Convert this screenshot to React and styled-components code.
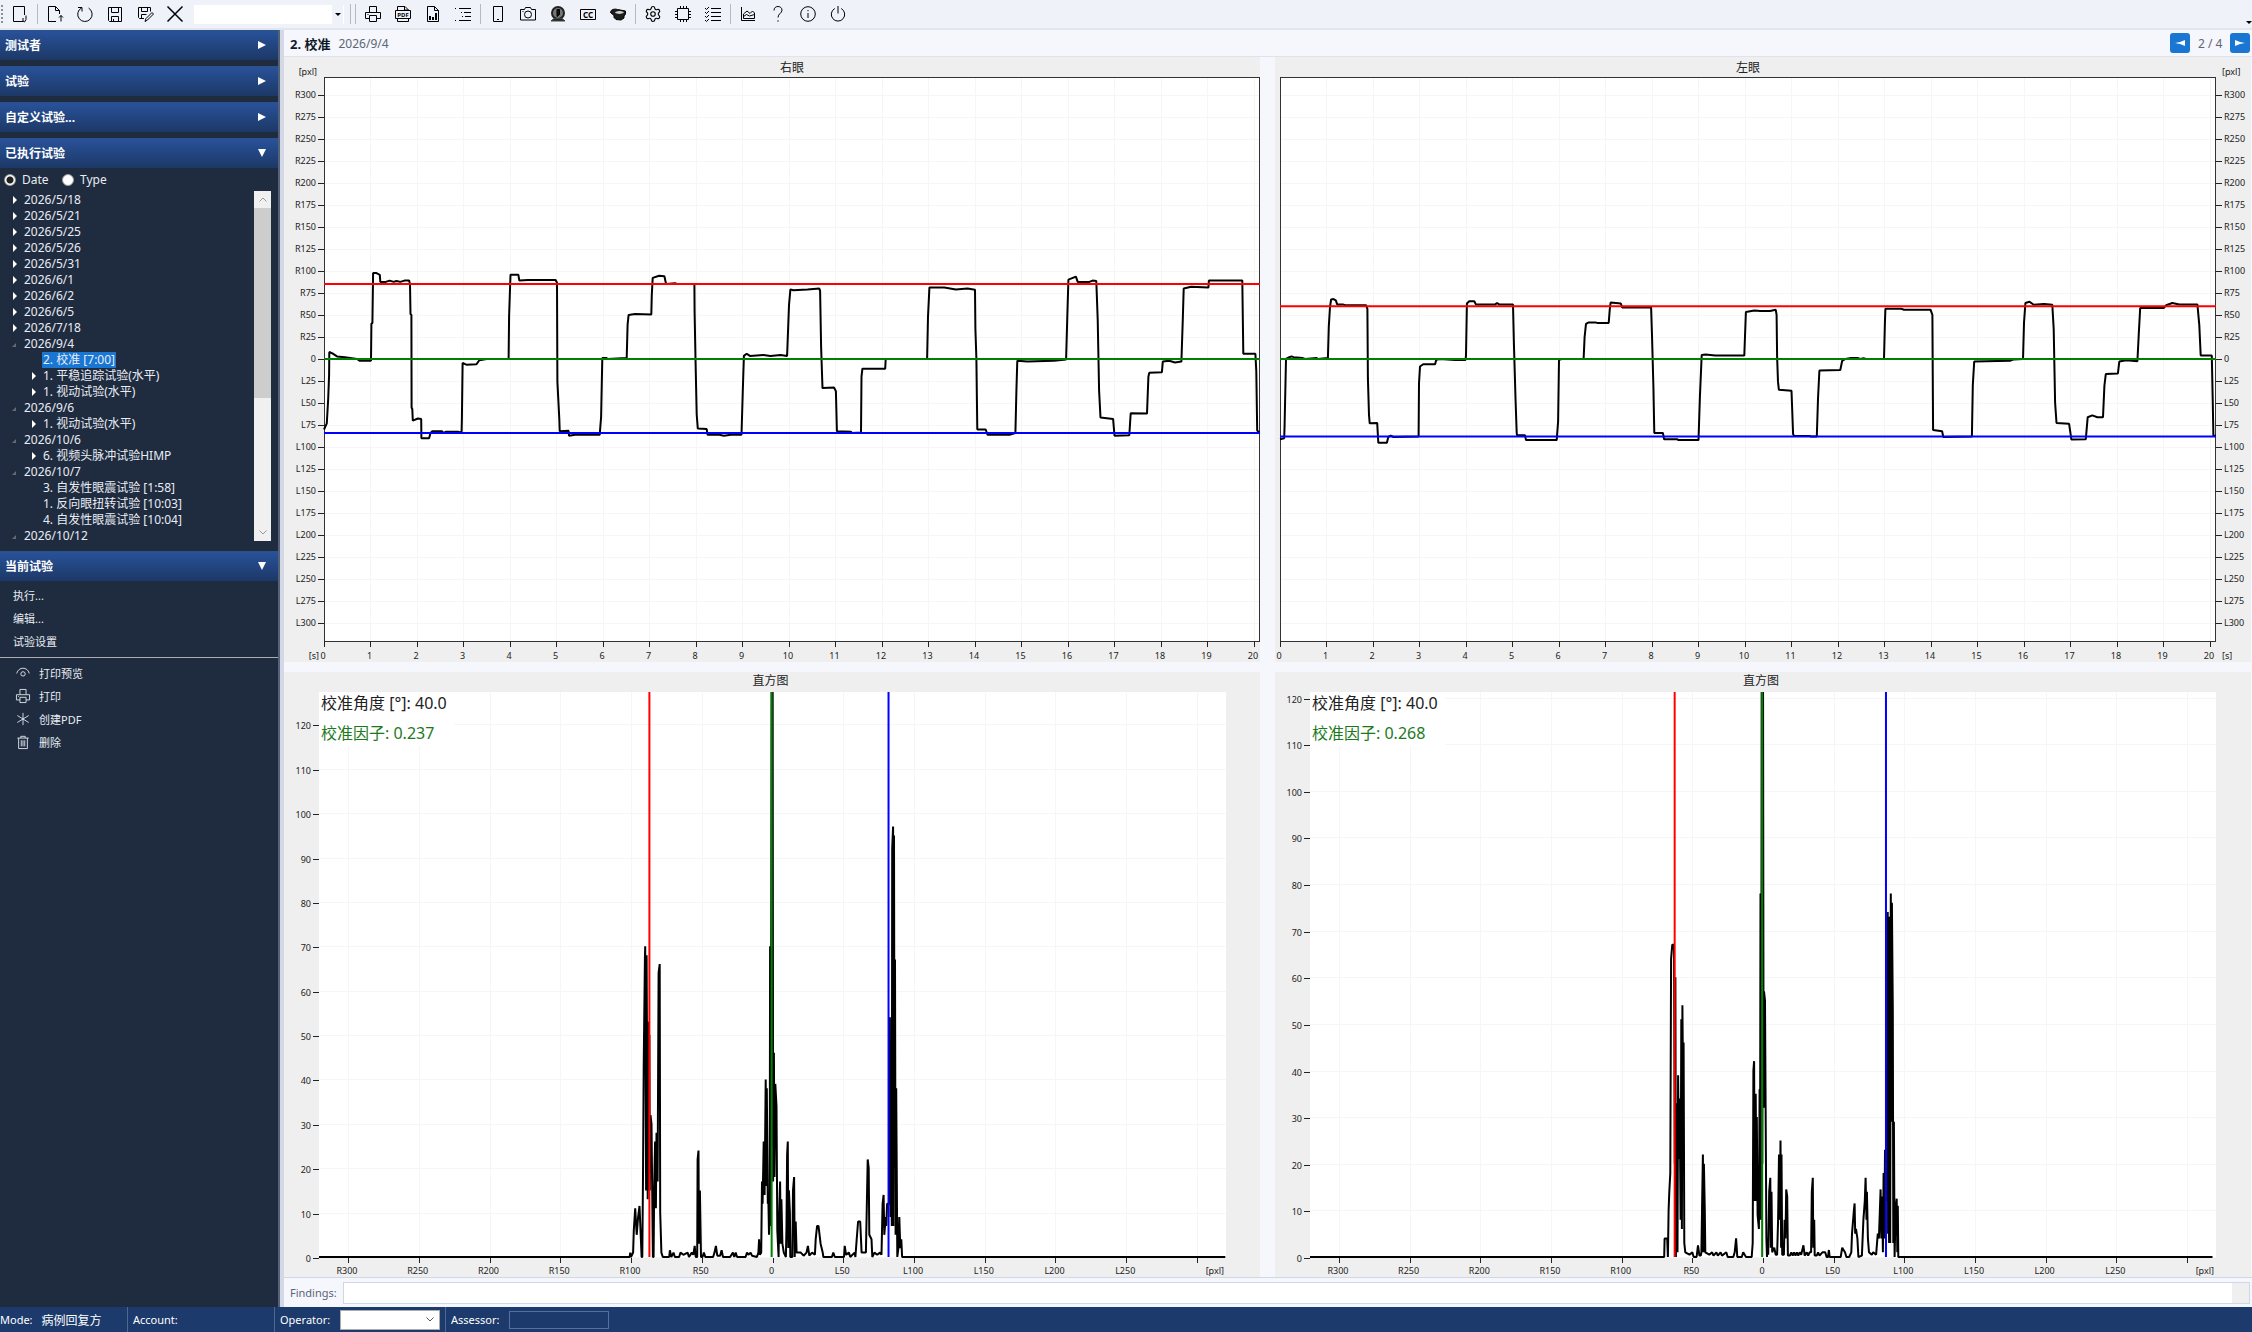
import { useLayoutEffect, useRef, useState } from 'react';
import styled, { createGlobalStyle } from 'styled-components';
import { Settings } from 'lucide-react';

const FONT = '"Noto Sans", "Noto Sans CJK SC", sans-serif';

/* ---------- recorded data ---------- */

// [seconds, pixels] pairs, right positive
const rightEye = [
  0, -80, 0.06, -73, 0.09, -45, 0.11, -18, 0.115, 8, 0.19, 6, 0.28, 3, 0.45, 2, 0.71, 0, 0.77, -2, 1.01, -2,
  1.02, 40, 1.04, 41, 1.055, 97.5, 1.13, 97.5, 1.2, 95.5, 1.21, 87.5, 1.33, 87.5, 1.41, 89, 1.5, 87.5, 1.56, 88.5,
  1.64, 87.5, 1.73, 89, 1.83, 89, 1.85, 85, 1.86, 51, 1.88, 50, 1.885, -55, 1.9, -57, 1.91, -70, 2.02, -67.5,
  2.09, -68, 2.095, -90, 2.26, -90, 2.29, -84, 2.33, -82, 2.54, -82, 2.57, -84, 2.63, -82.5, 2.88, -82.5,
  2.96, -83.5, 2.965, -67, 2.98, -4.5, 3.06, -6.5, 3.28, -6, 3.34, -1.5, 3.5, 0, 3.97, 0, 3.98, 49, 4.01, 95.5,
  4.18, 95.5, 4.2, 89, 4.39, 89.7, 4.98, 89.7, 5.01, 86.5, 5.02, -26, 5.06, -68, 5.07, -82, 5.26, -81.5, 5.27, -87,
  5.4, -86, 5.93, -86, 5.96, -66, 5.985, 1, 6.08, 1, 6.1, 0, 6.51, 1, 6.53, 39, 6.55, 50, 6.69, 51, 7.04, 50.5,
  7.05, 73, 7.07, 92, 7.21, 94.5, 7.32, 94, 7.35, 86.5, 7.37, 85, 7.55, 86, 7.6, 85, 7.965, 85, 7.97, 53, 7.99, 0,
  8.015, -63, 8.04, -79, 8.23, -79.5, 8.25, -86, 8.5, -86, 8.6, -87, 8.75, -86, 8.98, -86, 9.006, -36, 9.03, 3.5,
  9.09, 6, 9.16, 3.5, 9.45, 4.5, 9.6, 3.5, 9.82, 4.5, 9.96, 3.5, 10, 61, 10.03, 79, 10.09, 78, 10.4, 79, 10.65, 80,
  10.67, 77.5, 10.69, 14, 10.72, -33, 10.97, -32.5, 11.01, -36.5, 11.03, -82, 11.33, -82.5, 11.36, -84,
  11.55, -83.5, 11.56, -20, 11.58, -11, 12.07, -11, 12.08, 0, 12.97, 0, 12.99, 48, 13.02, 81, 13.34, 81, 13.59, 79,
  13.84, 80, 14, 78.5, 14.01, 34, 14.03, 0, 14.05, -80, 14.23, -80, 14.27, -86, 14.74, -86, 14.87, -84, 14.89, -36,
  14.91, -2, 15.13, -3, 15.7, -2, 15.96, -0.5, 15.985, 48, 16.01, 90, 16.17, 93.5, 16.21, 87.5, 16.46, 87.5,
  16.53, 89, 16.61, 88.5, 16.64, 45, 16.67, -36, 16.7, -66.5, 16.97, -68, 17, -87, 17.32, -86.5, 17.35, -61.5,
  17.7, -62, 17.73, -20, 17.75, -15.5, 18.02, -15, 18.04, -3, 18.18, -2, 18.3, -4, 18.44, -3, 18.47, 45, 18.49, 80,
  18.65, 82, 19.02, 81, 19.03, 89, 19.75, 89, 19.77, 6, 20.03, 6, 20.05, -14, 20.07, -81, 20.13, -84,
];

const leftEye = [
  0, -91, 0.09, -90, 0.1, -75, 0.13, 0, 0.2, 2, 0.25, 3, 0.29, 2, 0.49, 1, 0.54, 0, 0.79, 1, 0.82, 0, 1.03, 1,
  1.05, 37, 1.075, 59, 1.1, 67.5, 1.15, 68, 1.2, 66.5, 1.23, 62, 1.35, 62, 1.4, 61, 1.85, 61, 1.88, 57, 1.89, -22,
  1.915, -63.5, 1.93, -73, 2.09, -72.5, 2.115, -95, 2.3, -95, 2.33, -88.5, 2.38, -87, 2.44, -88.5, 2.98, -88,
  2.99, -27.5, 3.01, -8.5, 3.08, -6, 3.335, -6, 3.36, -1, 3.44, 0, 3.77, -1, 3.99, -1, 4, 4, 4.02, 63, 4.07, 65.5,
  4.18, 65.5, 4.21, 62, 4.63, 62, 4.67, 63.5, 4.71, 62, 5.01, 62, 5.03, 18, 5.065, -44.5, 5.09, -84, 5.1, -86.5,
  5.27, -86.5, 5.29, -92, 5.95, -92, 5.98, -71, 6, -1, 6.06, 0, 6.53, 0, 6.55, 25, 6.58, 40, 6.64, 41.5, 6.78, 41.5,
  6.82, 41, 7.07, 41, 7.09, 55.5, 7.11, 64, 7.33, 63, 7.36, 58.5, 7.98, 58.5, 8, 27, 8.03, -31, 8.05, -84,
  8.235, -84, 8.26, -91, 8.54, -91, 8.57, -92, 9, -92, 9.03, -43, 9.07, 4.5, 9.15, 5, 9.36, 4, 9.985, 4,
  10.02, 53.5, 10.2, 55, 10.33, 54.5, 10.54, 54.5, 10.66, 56, 10.68, 50, 10.69, 3, 10.71, -26, 10.73, -35, 11, -36,
  11.035, -85.5, 11.06, -87.5, 11.4, -87.5, 11.42, -88, 11.545, -88, 11.57, -45, 11.6, -13, 12.05, -12.5, 12.09, -2,
  12.16, 0, 12.28, 1, 12.43, 1, 12.48, 0, 12.55, 1, 12.6, 0, 12.99, 0, 13.01, 41, 13.02, 57, 13.36, 57, 13.42, 56,
  13.99, 56, 14.03, 50, 14.045, -80.5, 14.24, -82, 14.265, -88.5, 14.88, -88, 14.9, -30, 14.93, -3, 15.7, -2,
  15.78, -0.5, 15.98, 0, 16, 41, 16.03, 63.5, 16.12, 65, 16.21, 61.5, 16.43, 62.5, 16.61, 61.5, 16.64, 34,
  16.67, -49.5, 16.7, -72.5, 16.97, -73.5, 17.02, -91.5, 17.33, -91, 17.37, -66, 17.47, -64, 17.58, -66, 17.7, -66,
  17.73, -30.5, 17.76, -17, 18.02, -16.5, 18.05, -3, 18.2, -1.5, 18.44, -2.5, 18.47, 29, 18.5, 58, 19.01, 58,
  19.06, 61, 19.19, 63.5, 19.34, 62, 19.73, 62, 19.77, 38.5, 19.8, 4, 20.04, 4, 20.06, -45, 20.075, -87, 20.13, -87,
];

// [position, count] pairs, left positive
const rightHist = [
  -321, 0, -101, 0, -100.5, 1, -100, 0, -98.5, 1, -98, 6, -97, 11, -96, 5, -95, 9, -94, 11.5, -93, 4, -92.5, 0,
  -92, 0, -91.5, 18, -91, 43, -90.2, 67, -90, 70, -89.3, 15, -89, 68, -88.2, 13, -88, 53, -87.4, 15, -87, 50,
  -86.7, 15, -86.2, 32, -85.5, 30, -85, 15, -84.5, 0, -84, 0, -83.6, 16, -83, 26, -82.4, 11, -82, 28, -81.2, 17,
  -80.5, 64, -79.7, 66, -79.4, 10, -78.5, 1, -77.5, 0, -73, 0, -72.5, 1.5, -71.5, 0, -70, 1, -69, 0, -66, 0, -65, 1,
  -63, 0.5, -60, 1, -59, 0, -57, 1, -56, 0.5, -55, 2.5, -54.3, 0, -53.2, 0, -52.9, 22, -52.3, 24, -52, 3, -51.3, 15,
  -50.5, 0, -49.5, 0, -48.5, 1, -47.5, 0, -42, 0, -41, 1, -40, 2.5, -39, 0.3, -37, 0.3, -36, 1.5, -35, 0, -30, 0,
  -28, 1, -27, 0, -26, 1, -25, 0, -19, 0, -18, 1, -17, 0.5, -15.5, 1, -14.5, 0.3, -11, 0, -10, 1, -9.5, 4, -9, 0.5,
  -8, 1, -7.4, 17, -7, 12, -6.2, 26, -5.6, 14, -4.8, 40, -4.2, 16, -4, 38, -3.3, 12, -3, 14, -2.5, 5, -2, 10,
  -1.7, 70, -1.2, 7, -0.6, 140, -0.2, 25, 0.1, 140, 0.4, 17, 1, 46, 1.4, 18, 2, 39, 2.8, 34, 3.4, 6, 4.3, 0,
  4.7, 10, 5.4, 17, 5.9, 3, 6.3, 13, 7, 3, 8, 1, 9.5, 0, 9.9, 7, 10.3, 23, 10.8, 26, 11.2, 2, 11.6, 15, 12.3, 10,
  12.6, 0, 14, 0, 14.5, 15, 15.3, 18, 15.7, 0, 16.4, 8, 17, 1, 20, 1, 22, 0.3, 24, 1, 25, 2.5, 26, 0.3, 28, 1, 30, 0.5,
  30.5, 4, 31.5, 7, 32.5, 7, 34, 3, 35.5, 1, 36, 0, 42, 0, 43, 1, 44, 0, 50.5, 0, 51, 2.5, 52, 0.5, 54, 1, 55, 0,
  58, 1, 58.6, 0, 59.5, 4, 60.5, 8, 62, 8, 63, 1, 66, 1, 66.5, 9, 67.3, 22, 68, 20, 68.4, 5, 70, 4, 70.5, 0, 72, 1,
  74, 0.5, 76, 1, 77, 0.5, 77.8, 12, 78.5, 14, 79, 5, 80, 9, 80.4, 7, 81, 12, 82.4, 12, 83, 54, 83.4, 9, 83.8, 23,
  84.3, 7, 84.6, 92, 85.2, 97, 85.4, 7, 85.9, 95, 86.3, 20, 86.6, 67, 87, 5, 87.4, 38, 88.2, 0, 89, 2, 89.6, 9,
  90.3, 2, 91, 4, 91.6, 0, 320, 0,
];

const leftHist = [
  -321, 0, -69.9, 0, -69.6, 4, -67.8, 4, -67.3, 0, -66.8, 10, -66.3, 14, -65.6, 18, -65, 64, -64.2, 67, -63, 67,
  -62.4, 20, -62, 60, -61.6, 0, -61, 33, -60.5, 1, -60.1, 39, -59.5, 21, -58.9, 34, -58.3, 8, -57.8, 51, -57.4, 6,
  -57, 54, -56.6, 39, -56.2, 46, -55.7, 3, -55, 1, -52, 0.5, -50, 1, -49, 0, -47, 0, -46, 2.5, -45, 0.3, -44, 0.3,
  -43.6, 1, -43.1, 11, -42.5, 22, -42.2, 1, -41.8, 20, -41.2, 10, -40.8, 1, -38, 0.5, -36, 1, -35, 0.3, -33, 1,
  -32, 0.3, -30, 1, -29, 0.3, -26, 1, -25, 0, -21, 0, -20, 1, -19, 4, -18.2, 0, -15, 0, -14, 1, -12, 0, -8, 0,
  -7.3, 3, -6.8, 40, -6.3, 42, -5.9, 12, -5.2, 35, -4.6, 12, -4.4, 30, -3.8, 9, -2.9, 6, -2.4, 36, -2.1, 8,
  -1.8, 78, -1.3, 8, -0.9, 130, -0.5, 20, 0, 130, 0.4, 32, 0.7, 57, 1.4, 55, 1.9, 29, 2.4, 4, 2.8, 0, 3.2, 3,
  3.7, 0.5, 4.4, 14, 5.2, 17, 5.5, 2, 6, 14, 6.5, 1, 8, 2, 9, 0.5, 10, 0.5, 10.7, 8, 11.3, 22, 11.8, 8, 12.4, 25,
  12.8, 2, 13.1, 22, 13.6, 0.5, 14.8, 0.5, 15.3, 8, 15.9, 4, 16.4, 14.5, 17.1, 13, 17.6, 0.3, 19, 0.3, 20, 1, 21, 0.3,
  22, 1, 23, 0.3, 24, 1, 25, 0.3, 26, 1, 27, 0.5, 28.6, 2.5, 29.5, 0.3, 31, 1, 32, 0.3, 33, 1, 34, 1, 34.5, 14,
  35.2, 17, 35.6, 2, 36.2, 8, 36.6, 0.3, 38, 0.3, 39, 1, 40, 0.3, 42, 1, 44, 1, 45, 0, 46, 0, 46.6, 1.5, 47.2, 0,
  55, 0, 56, 2, 58, 1, 59, 0, 61, 0, 62.5, 1, 63, 5, 64.3, 10, 64.8, 11.5, 65.2, 5, 65.8, 6, 66.8, 4, 67.5, 0,
  70, 0.3, 71, 8, 72, 12, 72.6, 17, 73.2, 8, 73.5, 14, 74.2, 4, 75, 1, 77, 0.5, 78, 1, 80, 0.5, 81.2, 5, 82, 4,
  83.2, 14.5, 83.7, 4, 84.3, 13, 84.8, 1, 85.3, 18, 85.8, 4, 86.3, 23, 86.9, 13, 87.4, 40, 87.8, 12, 88.2, 74,
  88.5, 5, 88.8, 17, 89.2, 3, 89.6, 73, 90, 3, 90.4, 78, 90.8, 29, 91.2, 76, 91.8, 53, 92.2, 3, 92.6, 29, 93.1, 0,
  93.8, 10, 94.6, 12.5, 95, 1, 95.4, 11, 95.7, 0, 318, 0,
];

const degrees = Array.from({ length: 25 }, (_, i) => 300 - i * 25);
const seconds = Array.from({ length: 21 }, (_, i) => i);
const positions = Array.from({ length: 13 }, (_, i) => -300 + i * 50);

const sideLabel = (v, positive, negative) =>
  v === 0 ? '0' : `${v > 0 ? positive : negative}${Math.abs(v)}`;

/* ---------- charts ---------- */

function useSize() {
  const ref = useRef(null);
  const [size, setSize] = useState({ width: 0, height: 0 });
  useLayoutEffect(() => {
    const measure = () =>
      setSize({ width: ref.current.clientWidth, height: ref.current.clientHeight });
    measure();
    const observer = new ResizeObserver(measure);
    observer.observe(ref.current);
    return () => observer.disconnect();
  }, []);
  return [ref, size];
}

const toPoints = (data, x, y) => {
  const points = [];
  for (let i = 0; i < data.length; i += 2) {
    points.push(`${x(data[i]).toFixed(1)},${y(data[i + 1]).toFixed(1)}`);
  }
  return points.join(' ');
};

const snap = (v) => Math.round(v) + 0.5;

function EyeChart({ title, data, upper, lower, side, margin }) {
  const [ref, { width, height }] = useSize();
  const x0 = margin.left;
  const x1 = width - margin.right;
  const y0 = 20;
  const y1 = height - 21;
  const x = (t) => x0 + (t / 20.13) * (x1 - x0);
  const y = (v) => (y0 + y1) / 2 - (v / 640) * (y1 - y0);
  const atLeft = side === 'left';
  const edge = atLeft ? x0 : x1;

  return (
    <Panel ref={ref}>
      {width > 0 && (
        <Chart>
          <ChartTitle x={(x0 + x1) / 2} y={15}>
            {title}
          </ChartTitle>
          <rect x={x0} y={y0} width={x1 - x0} height={y1 - y0} fill='#fff' />
          {degrees.map((v) => (
            <GridLine key={v} x1={x0} x2={x1} y1={snap(y(v))} y2={snap(y(v))} />
          ))}
          {seconds.map((t) => (
            <GridLine key={t} x1={snap(x(t))} x2={snap(x(t))} y1={y0} y2={y1} />
          ))}
          <Frame x={x0 + 0.5} y={y0 + 0.5} width={x1 - x0 - 1} height={y1 - y0} />
          <Trace points={toPoints(data, x, y)} />
          <Marker x1={x0} x2={x1} y1={y(upper)} y2={y(upper)} stroke='#ff0000' />
          <Marker x1={x0} x2={x1} y1={y(0)} y2={y(0)} stroke='#008000' />
          <Marker x1={x0} x2={x1} y1={y(lower)} y2={y(lower)} stroke='#0000ff' />
          {degrees.map((v) => (
            <g key={v}>
              <Tick
                x1={atLeft ? edge - 6 : edge}
                x2={atLeft ? edge : edge + 6}
                y1={snap(y(v))}
                y2={snap(y(v))}
              />
              <AxisText
                x={atLeft ? edge - 8 : edge + 8}
                y={y(v) + 3}
                textAnchor={atLeft ? 'end' : 'start'}
              >
                {sideLabel(v, 'R', 'L')}
              </AxisText>
            </g>
          ))}
          {seconds.map((t) => (
            <g key={t}>
              <Tick x1={snap(x(t))} x2={snap(x(t))} y1={y1} y2={y1 + 6} />
              <AxisText x={x(t) - 1} y={y1 + 18} textAnchor='middle'>
                {t}
              </AxisText>
            </g>
          ))}
          <AxisText
            x={atLeft ? edge - 7 : edge + 6}
            y={y0 - 2}
            textAnchor={atLeft ? 'end' : 'start'}
          >
            [pxl]
          </AxisText>
          <AxisText
            x={atLeft ? edge - 5 : edge + 6}
            y={y1 + 18}
            textAnchor={atLeft ? 'end' : 'start'}
          >
            [s]
          </AxisText>
        </Chart>
      )}
    </Panel>
  );
}

function Histogram({ data, top, red, blue, factor, margin }) {
  const [ref, { width, height }] = useSize();
  const x0 = margin.left;
  const x1 = width - margin.right;
  const y0 = 20;
  const y1 = height - 20;
  const x = (v) => x0 + ((v + 320.5) / 641) * (x1 - x0);
  const y = (c) => y1 - (c / top) * (y1 - y0);
  const counts = Array.from({ length: 13 }, (_, i) => i * 10);
  const clip = `hist-${factor}`;

  return (
    <Panel ref={ref}>
      {width > 0 && (
        <Chart>
          <clipPath id={clip}>
            <rect x={x0} y={y0} width={x1 - x0} height={y1 - y0 + 1} />
          </clipPath>
          <ChartTitle x={(x0 + x1) / 2 - 2} y={13}>
            直方图
          </ChartTitle>
          <rect x={x0} y={y0} width={x1 - x0} height={y1 - y0} fill='#fff' />
          {counts.map((c) => (
            <GridLine key={c} x1={x0} x2={x1} y1={snap(y(c))} y2={snap(y(c))} />
          ))}
          {positions.map((p) => (
            <GridLine key={p} x1={snap(x(p))} x2={snap(x(p))} y1={y0} y2={y1} />
          ))}
          <rect x={x0 + 1} y={y0 + 1} width={134} height={53} fill='#fff' />
          <g clipPath={`url(#${clip})`}>
            <Trace points={toPoints(data, x, y)} />
            <Marker x1={x(red)} x2={x(red)} y1={y0} y2={y1} stroke='#ff0000' />
            <Marker x1={x(-0.6)} x2={x(-0.6)} y1={y0} y2={y1} stroke='#008000' />
            <Marker x1={x(blue)} x2={x(blue)} y1={y0} y2={y1} stroke='#0000ff' />
          </g>
          {counts.map((c) => (
            <g key={c}>
              <Tick x1={x0 - 6} x2={x0} y1={snap(y(c) + 1)} y2={snap(y(c) + 1)} />
              <AxisText x={x0 - 8} y={y(c) + 5} textAnchor='end'>
                {c}
              </AxisText>
            </g>
          ))}
          {positions.map((p) => (
            <g key={p}>
              <Tick x1={snap(x(p))} x2={snap(x(p))} y1={y1 + 1} y2={y1 + 6} />
              {p < 300 && (
                <AxisText x={x(p) - 1} y={y1 + 17} textAnchor='middle'>
                  {sideLabel(p, 'L', 'R')}
                </AxisText>
              )}
            </g>
          ))}
          <AxisText x={x1 - 2} y={y1 + 17} textAnchor='end'>
            [pxl]
          </AxisText>
          <Note x={x0 + 2} y={y0 + 17} fill='#222'>
            校准角度 [°]: 40.0
          </Note>
          <Note x={x0 + 2} y={y0 + 47} fill='#1c7a1c'>
            校准因子: {factor}
          </Note>
        </Chart>
      )}
    </Panel>
  );
}

/* ---------- icons ---------- */

const IconSvg = styled.svg`
  width: 16px;
  height: 16px;
  fill: none;
  stroke: currentColor;
  stroke-width: 1;
  overflow: visible;
`;

const IconText = styled.text`
  font-family: ${FONT};
  font-weight: 700;
  text-anchor: middle;
  fill: currentColor;
  stroke: none;
`;

const icons = {
  newDoc: (
    <>
      <path d='M12.5 9V.5h-11v15H11' />
      <path d='M14 9.500v4L12.500 16 11 15v-3' />
    </>
  ),
  docUp: (
    <>
      <path d='M9 15.500H1.500V.5h7l4 4V8M8.500 .5v4h4' />
      <path d='M14 15.500v-6M12 11.500l2-2 2 2' />
    </>
  ),
  reload: <path d='M1 1.500h4v4M4.600 1.900a7.200 7.200 0 1 0 7 .2' />,
  save: <path d='M1.500 1.500h13v14h-12l-1-1zM4.500 1.500v5h7v-5M4.500 15.500v-5h7v5M6.500 13v2.500' />,
  saveEdit: (
    <>
      <path d='M7 12.500H2.500l-1-1v-10h12v4M4.500 1.500v4h6v-4M4.500 12.500v-4h5' />
      <path d='M8 15.500l1-3 6-6L16.500 8l-6 6z' />
    </>
  ),
  cross: <path d='M.5 .5l15 15M15.500 .5l-15 15' strokeWidth='1.500' />,
  printer: <path d='M4.500 6V.5h7V6M4.500 12.500h-4v-6h15v6h-4M4.500 9.500h7v6h-7zM2.500 8.500h1' />,
  pdf: (
    <>
      <path d='M2.500 4V.5H10L13.500 4M9.500 .5V4h4M2.500 12.500v3h11v-3M.5 4.500h15v8H.5z' />
      <IconText x='8' y='11' fontSize='6'>
        PDF
      </IconText>
    </>
  ),
  docBars: (
    <>
      <path d='M2.500 .5h7l4 4v11h-11zM9.500 .5v4h4' />
      <path d='M5 14v-4M8 14v-3M11 14V7' strokeWidth='2' />
    </>
  ),
  indent: <path d='M0 2.500h1M4 2.500h12M6 6.500h1M9 6.500h7M7 10.500h1M10 10.500h6M0 14.500h1M4 14.500h12' />,
  phone: <path d='M3.500 .5h9v15h-9zM7 13.500h2' />,
  camera: (
    <>
      <path d='M.5 3.500h4l1-2h5l1 2h4V14H.5zM2.500 5.500h1' />
      <circle cx='8' cy='8.500' r='3.500' />
    </>
  ),
  webcam: (
    <>
      <circle cx='8' cy='7' r='6' fill='#777' stroke='#222' strokeWidth='2' />
      <path d='M7 3.500h2.500v5L7 10.500z' fill='#111' />
      <path d='M1 15l3-2.500h8l3 2.500z' fill='#222' stroke='#444' />
    </>
  ),
  cc: (
    <>
      <path d='M.5 3.500h15v10H.5z' />
      <IconText x='8' y='11.500' fontSize='8'>
        CC
      </IconText>
    </>
  ),
  goggles: (
    <>
      <path d='M.5 6.500c0-3 4-4 7-3l8 1.500v3l-1.500 2v2l-3 2-5-.5-2-2v-2z' fill='#1c1c1c' />
      <path d='M5 6.500c2-2 7-2 9 0-2 1.800-7 2-9 0z' fill='#ccc' stroke='none' />
    </>
  ),
  chip: (
    <path d='M2.500 2.500h11v11h-11zM5.500 2.500V0M8.500 2.500V0M11.500 2.500V0M5.500 16v-2.500M8.500 16v-2.500M11.500 16v-2.500M2.500 5.500H0M2.500 8.500H0M2.500 11.500H0M16 5.500h-2.500M16 8.500h-2.500M16 11.500h-2.500' />
  ),
  checklist: (
    <path d='M6 2.500h10M6 6.500h10M6 10.500h10M6 14.500h10M0 2l1.500 1.500L4 1M0 6l1.500 1.500L4 5M0 10l1.500 1.500L4 9M0 14l1.500 1.500L4 13' />
  ),
  areaChart: <path d='M1.500 1v13.500H15M3.500 12.500V8L7 5l3 2.500L12.500 5l2 2v5.500zM3.500 10.500l3-2 3 1.500 5-1.500' />,
  help: <path d='M4 4.500C4 1.800 5.800 .5 8 .5s4 1.400 4 3.700c0 3-4 3.500-4 7.300M8 14.300v1.400' />,
  info: (
    <>
      <circle cx='8' cy='8' r='7.300' />
      <path d='M8 7v5M8 4v1.200' />
    </>
  ),
  power: <path d='M8 0v7.500M4.800 2.500a6.700 6.700 0 1 0 6.400 0' />,
  preview: (
    <>
      <path d='M.8 8.500c1-4 4-6 7.200-6s6.200 2 7.200 6' />
      <circle cx='8' cy='9' r='2.500' />
    </>
  ),
  star: <path d='M8 1v14M1.500 4l13 8M14.500 4l-13 8' />,
  trash: <path d='M1.500 3.500h13M5.500 3.500v-2h5v2M3 3.500v12h10v-12M6 6v7M8 6v7M10 6v7' />,
};

function Icon({ name }) {
  return (
    <IconSvg viewBox='0 0 16 16' aria-hidden='true'>
      {icons[name]}
    </IconSvg>
  );
}

/* ---------- page content ---------- */

const tree = [
  { label: '2026/5/18', arrow: 'closed' },
  { label: '2026/5/21', arrow: 'closed' },
  { label: '2026/5/25', arrow: 'closed' },
  { label: '2026/5/26', arrow: 'closed' },
  { label: '2026/5/31', arrow: 'closed' },
  { label: '2026/6/1', arrow: 'closed' },
  { label: '2026/6/2', arrow: 'closed' },
  { label: '2026/6/5', arrow: 'closed' },
  { label: '2026/7/18', arrow: 'closed' },
  { label: '2026/9/4', arrow: 'open' },
  { label: '2. 校准 [7:00]', child: true, selected: true },
  { label: '1. 平稳追踪试验(水平)', child: true, arrow: 'closed' },
  { label: '1. 视动试验(水平)', child: true, arrow: 'closed' },
  { label: '2026/9/6', arrow: 'open' },
  { label: '1. 视动试验(水平)', child: true, arrow: 'closed' },
  { label: '2026/10/6', arrow: 'open' },
  { label: '6. 视频头脉冲试验HIMP', child: true, arrow: 'closed' },
  { label: '2026/10/7', arrow: 'open' },
  { label: '3. 自发性眼震试验 [1:58]', child: true },
  { label: '1. 反向眼扭转试验 [10:03]', child: true },
  { label: '4. 自发性眼震试验 [10:04]', child: true },
  { label: '2026/10/12', arrow: 'open' },
];

const toolGroups = [
  ['printer', 'pdf', 'docBars', 'indent'],
  ['phone', 'camera', 'webcam', 'cc', 'goggles'],
  ['gear', 'chip', 'checklist'],
  ['areaChart', 'help', 'info', 'power'],
];

function ToolButton({ name }) {
  return (
    <Tool type='button' aria-label={name}>
      {name === 'gear' ? <Settings size={18} strokeWidth={1.5} /> : <Icon name={name} />}
    </Tool>
  );
}

function Toolbar() {
  return (
    <ToolbarRow>
      <Grip />
      <ToolButton name='newDoc' />
      <Divider />
      {['docUp', 'reload', 'save', 'saveEdit', 'cross'].map((name) => (
        <ToolButton key={name} name={name} />
      ))}
      <ToolSelectBox>
        <ToolSelect aria-label='filter' />
        <svg viewBox='0 0 6 3' aria-hidden='true'>
          <path d='M0 0h6L3 3z' />
        </svg>
      </ToolSelectBox>
      <Divider />
      {toolGroups.map((group, i) => [
        <Divider key={i} />,
        ...group.map((name) => <ToolButton key={name} name={name} />),
      ])}
      <Overflow type='button' aria-label='more'>
        <svg viewBox='0 0 6 3' aria-hidden='true'>
          <path d='M0 0h6L3 3z' />
        </svg>
      </Overflow>
    </ToolbarRow>
  );
}

function Section({ title, open }) {
  return (
    <SectionButton type='button' aria-expanded={!!open}>
      {title}
      <svg viewBox='0 0 8 8' aria-hidden='true'>
        <path d={open ? 'M0 0h8L4 8z' : 'M0 0l8 4-8 4z'} />
      </svg>
    </SectionButton>
  );
}

function Sidebar() {
  const [sort, setSort] = useState('Date');
  return (
    <Side>
      <Section title='测试者' />
      <Section title='试验' />
      <Section title='自定义试验...' />
      <Section title='已执行试验' open />
      <SortRow>
        {['Date', 'Type'].map((name) => (
          <label key={name}>
            <input
              type='radio'
              name='sort'
              checked={sort === name}
              onChange={() => setSort(name)}
            />
            {name}
          </label>
        ))}
      </SortRow>
      <TreeBox>
        <Tree>
          {tree.map((row, i) => (
            <TreeRow key={i} $child={row.child}>
              <TreeArrow viewBox='0 0 10 8' aria-hidden='true'>
                {row.arrow === 'closed' && <path d='M3 0l4 4-4 4z' fill='#fff' />}
                {row.arrow === 'open' && <path d='M6 3v4H2z' fill='#6b6b6b' />}
              </TreeArrow>
              <TreeLabel type='button' $selected={row.selected}>
                {row.label}
              </TreeLabel>
            </TreeRow>
          ))}
        </Tree>
        <Scrollbar>
          <button type='button' aria-label='up'>
            <svg viewBox='0 0 8 5'>
              <path d='M.5 4.500L4 1l3.500 3.500' />
            </svg>
          </button>
          <Thumb />
          <button type='button' aria-label='down'>
            <svg viewBox='0 0 8 5'>
              <path d='M.5 .5L4 4 7.500 .5' />
            </svg>
          </button>
        </Scrollbar>
      </TreeBox>
      <Section title='当前试验' open />
      <Menu>
        <MenuItem type='button'>执行...</MenuItem>
        <MenuItem type='button'>编辑...</MenuItem>
        <MenuItem type='button'>试验设置</MenuItem>
      </Menu>
      <Menu $ruled>
        <MenuItem type='button'>
          <Icon name='preview' />
          打印预览
        </MenuItem>
        <MenuItem type='button'>
          <Icon name='printer' />
          打印
        </MenuItem>
        <MenuItem type='button'>
          <Icon name='star' />
          创建PDF
        </MenuItem>
        <MenuItem type='button'>
          <Icon name='trash' />
          删除
        </MenuItem>
      </Menu>
    </Side>
  );
}

function App() {
  return (
    <>
      <GlobalStyle />
      <Page>
        <Toolbar />
        <Body>
          <Sidebar />
          <Content>
            <Header>
              <h1>2. 校准</h1>
              <time>2026/9/4</time>
              <Pager>
                <button type='button' aria-label='previous'>
                  <svg viewBox='0 0 10 6'>
                    <path d='M0 3l5-1 5-2v6l-5-2z' />
                  </svg>
                </button>
                <span>2 / 4</span>
                <button type='button' aria-label='next'>
                  <svg viewBox='0 0 10 6'>
                    <path d='M10 3L5 2 0 0v6l5-2z' />
                  </svg>
                </button>
              </Pager>
            </Header>
            <Charts>
              <EyeChart
                title='右眼'
                data={rightEye}
                upper={85}
                lower={-84}
                side='left'
                margin={{ left: 40, right: 0 }}
              />
              <EyeChart
                title='左眼'
                data={leftEye}
                upper={60}
                lower={-88}
                side='right'
                margin={{ left: 5, right: 35 }}
              />
              <Histogram
                data={rightHist}
                top={127.3}
                red={-87}
                blue={82}
                factor='0.237'
                margin={{ left: 35, right: 34 }}
              />
              <Histogram
                data={leftHist}
                top={121.2}
                red={-62.5}
                blue={87}
                factor='0.268'
                margin={{ left: 35, right: 35 }}
              />
            </Charts>
            <Findings>
              <label htmlFor='findings'>Findings:</label>
              <div>
                <input id='findings' />
              </div>
            </Findings>
          </Content>
        </Body>
        <StatusBar>
          <StatusCell $width={128}>
            Mode: <strong>病例回复方</strong>
          </StatusCell>
          <StatusCell $width={147}>Account:</StatusCell>
          <StatusCell $width={171}>
            <label htmlFor='operator'>Operator:</label>
            <SelectBox>
              <select id='operator' />
              <svg viewBox='0 0 8 5' aria-hidden='true'>
                <path d='M.5 .5L4 4 7.500 .5' />
              </svg>
            </SelectBox>
          </StatusCell>
          <StatusCell>
            <label htmlFor='assessor'>Assessor:</label>
            <input id='assessor' />
          </StatusCell>
        </StatusBar>
      </Page>
    </>
  );
}

/* ---------- styles ---------- */

const GlobalStyle = createGlobalStyle`
  * {
    box-sizing: border-box;
  }
  body {
    margin: 0;
    font-family: ${FONT};
    font-size: 12px;
    color: #1a1a1a;
  }
  button, input, select {
    font: inherit;
    color: inherit;
    margin: 0;
    padding: 0;
    border: 0;
    border-radius: 0;
    background: none;
  }
  svg {
    display: block;
  }
`;

const Page = styled.div`
  display: flex;
  flex-direction: column;
  min-height: 100vh;
`;

const Body = styled.div`
  flex: 1;
  display: flex;
`;

const ToolbarRow = styled.div`
  display: flex;
  align-items: center;
  height: 30px;
  background: #eff3f9;
  border-bottom: 2px solid #e2e7ee;
`;

const Grip = styled.span`
  width: 5px;
  height: 18px;
  background: repeating-linear-gradient(#8a8f98 0 2px, transparent 2px 4px) 1px 0 / 2px 100% no-repeat;
`;

const Tool = styled.button`
  display: grid;
  place-items: center;
  width: 30px;
  height: 26px;
  color: #000;
`;

const Divider = styled.span`
  width: 1px;
  height: 20px;
  margin: 0 2px;
  background: #b4bac4;
`;

const ToolSelectBox = styled.div`
  display: flex;
  align-items: center;
  width: 150px;
  height: 19px;
  margin: 0 4px;
  padding-right: 3px;
  background: linear-gradient(to left, #fff 1px, #eff3f9 1px 12px, #fff 12px);
  svg {
    width: 6px;
    height: 3px;
  }
`;

const ToolSelect = styled.select`
  flex: 1;
  appearance: none;
`;

const Overflow = styled.button`
  align-self: flex-end;
  margin-left: auto;
  padding: 0 0 4px 2px;
  svg {
    width: 6px;
    height: 3px;
  }
`;

const Side = styled.aside`
  display: flex;
  flex-direction: column;
  width: 284px;
  background: #1f2b3e;
  color: #e8edf5;
  border-right: 4px solid #d2d8e6;
  box-shadow: inset -2px 0 #55627a;
`;

const SectionButton = styled.button`
  display: flex;
  align-items: center;
  justify-content: space-between;
  height: 30px;
  margin-right: 2px;
  padding: 0 12px 1px 5px;
  font-weight: 700;
  color: #fff;
  background: linear-gradient(#29529a, #1c3866);
  border-top: 1px solid #2f5086;
  & + & {
    margin-top: 6px;
  }
  svg {
    width: 8px;
    height: 8px;
    fill: #fff;
  }
`;

const SortRow = styled.div`
  display: flex;
  gap: 12px;
  height: 23px;
  padding-left: 4px;
  label {
    display: flex;
    align-items: center;
    gap: 6px;
    width: 46px;
  }
  input {
    appearance: none;
    flex: none;
    width: 12px;
    height: 12px;
    border: 1px solid #9a9a9a;
    border-radius: 50%;
    background: #fff;
  }
  input:checked {
    background: radial-gradient(#222 0 3px, #fff 4px);
  }
`;

const TreeBox = styled.div`
  display: flex;
  align-items: flex-start;
  margin: 0 9px 6px 0;
`;

const Tree = styled.ul`
  flex: 1;
  margin: 0;
  padding: 1px 0;
  list-style: none;
`;

const TreeRow = styled.li`
  display: flex;
  align-items: center;
  height: 16px;
  padding-left: ${({ $child }) => ($child ? 29 : 10)}px;
`;

const TreeArrow = styled.svg`
  width: 10px;
  height: 8px;
`;

const TreeLabel = styled.button`
  height: 16px;
  margin-left: 3px;
  padding: 0 1px;
  line-height: 16px;
  white-space: nowrap;
  background: ${({ $selected }) => ($selected ? '#1976d2' : 'none')};
`;

const Scrollbar = styled.div`
  display: flex;
  flex-direction: column;
  width: 17px;
  height: 350px;
  background: #f0f0f0;
  button {
    display: grid;
    place-items: center;
    height: 17px;
  }
  button:last-child {
    margin-top: auto;
  }
  svg {
    width: 8px;
    height: 5px;
    fill: none;
    stroke: #9a9a9a;
  }
`;

const Thumb = styled.div`
  height: 190px;
  background: #cdcdcd;
`;

const Menu = styled.div`
  display: flex;
  flex-direction: column;
  margin-right: 2px;
  padding: ${({ $ruled }) => ($ruled ? '4px 0 0 16px' : '3px 0 4px 13px')};
  border-top: ${({ $ruled }) => ($ruled ? '1px solid #a9adb3' : 'none')};
`;

const MenuItem = styled.button`
  display: flex;
  align-items: center;
  gap: 9px;
  height: 23px;
  padding-bottom: 2px;
  font-size: 11px;
  svg {
    width: 14px;
    height: 14px;
  }
`;

const Content = styled.main`
  flex: 1;
  min-width: 0;
  display: flex;
  flex-direction: column;
  background: #f5f7fc;
`;

const Header = styled.header`
  display: flex;
  align-items: center;
  gap: 8px;
  height: 27px;
  padding: 0 2px 0 6px;
  border-bottom: 1px solid #dfe3ee;
  h1 {
    margin: 0;
    font-size: 13px;
    font-weight: 700;
    color: #111827;
  }
  time {
    color: #5d6675;
  }
`;

const Pager = styled.nav`
  display: flex;
  align-items: center;
  gap: 8px;
  margin-left: auto;
  color: #5d6675;
  button {
    display: grid;
    place-items: center;
    width: 20px;
    height: 20px;
    border-radius: 3px;
    background: #1976d2;
  }
  span {
    width: 24px;
    text-align: center;
    white-space: nowrap;
  }
  svg {
    width: 10px;
    height: 6px;
    fill: #fff;
  }
`;

const Charts = styled.div`
  flex: 1;
  display: grid;
  grid-template-columns: 1fr 1fr;
  grid-template-rows: 1fr 1fr;
  gap: 10px 15px;
  padding-right: 1px;
`;

const Panel = styled.section`
  position: relative;
  min-width: 0;
  min-height: 200px;
  background: #efefef;
`;

const Chart = styled.svg`
  position: absolute;
  inset: 0;
  width: 100%;
  height: 100%;
`;

const ChartTitle = styled.text`
  font-size: 12px;
  text-anchor: middle;
  fill: #222;
`;

const AxisText = styled.text`
  font-size: 9px;
  fill: #222;
`;

const Note = styled.text`
  font-size: 16px;
`;

const GridLine = styled.line`
  stroke: #f6f6f6;
  stroke-width: 1;
`;

const Tick = styled.line`
  stroke: #222;
  stroke-width: 1;
`;

const Frame = styled.rect`
  fill: none;
  stroke: #333;
  stroke-width: 1;
`;

const Trace = styled.polyline`
  fill: none;
  stroke: #000;
  stroke-width: 2;
  stroke-linejoin: bevel;
`;

const Marker = styled.line`
  stroke-width: 2;
`;

const Findings = styled.div`
  display: flex;
  align-items: center;
  height: 30px;
  padding: 0 2px 0 6px;
  border-top: 1px solid #d0d7e6;
  font-size: 11px;
  color: #5a6478;
  label {
    width: 53px;
  }
  div {
    flex: 1;
    display: flex;
    height: 22px;
    padding-right: 17px;
    border: 1px solid #cfd6e6;
    background: #efefef;
  }
  input {
    flex: 1;
    padding: 0 4px;
    background: #fff;
  }
`;

const StatusBar = styled.footer`
  display: flex;
  height: 25px;
  background: #1c3a6b;
  color: #fff;
  font-size: 11px;
  strong {
    margin-left: 9px;
    font-size: 12px;
    font-weight: 400;
  }
  select {
    flex: 1;
    appearance: none;
    color: #111;
  }
  input {
    width: 100px;
    height: 18px;
    margin-left: 10px;
    border: 1px solid #55709f;
  }
`;

const StatusCell = styled.div`
  display: flex;
  align-items: center;
  width: ${({ $width }) => ($width ? `${$width}px` : 'auto')};
  padding-left: 5px;
  border-right: ${({ $width }) => ($width ? '1px solid #4f668f' : 'none')};
  white-space: nowrap;
  &:first-child {
    padding-left: 0;
  }
`;

const SelectBox = styled.div`
  display: flex;
  align-items: center;
  width: 100px;
  height: 20px;
  margin-left: 10px;
  padding-right: 5px;
  background: #fff;
  border: 1px solid #acacac;
  svg {
    width: 8px;
    height: 5px;
    fill: none;
    stroke: #555;
  }
`;

export default App;
